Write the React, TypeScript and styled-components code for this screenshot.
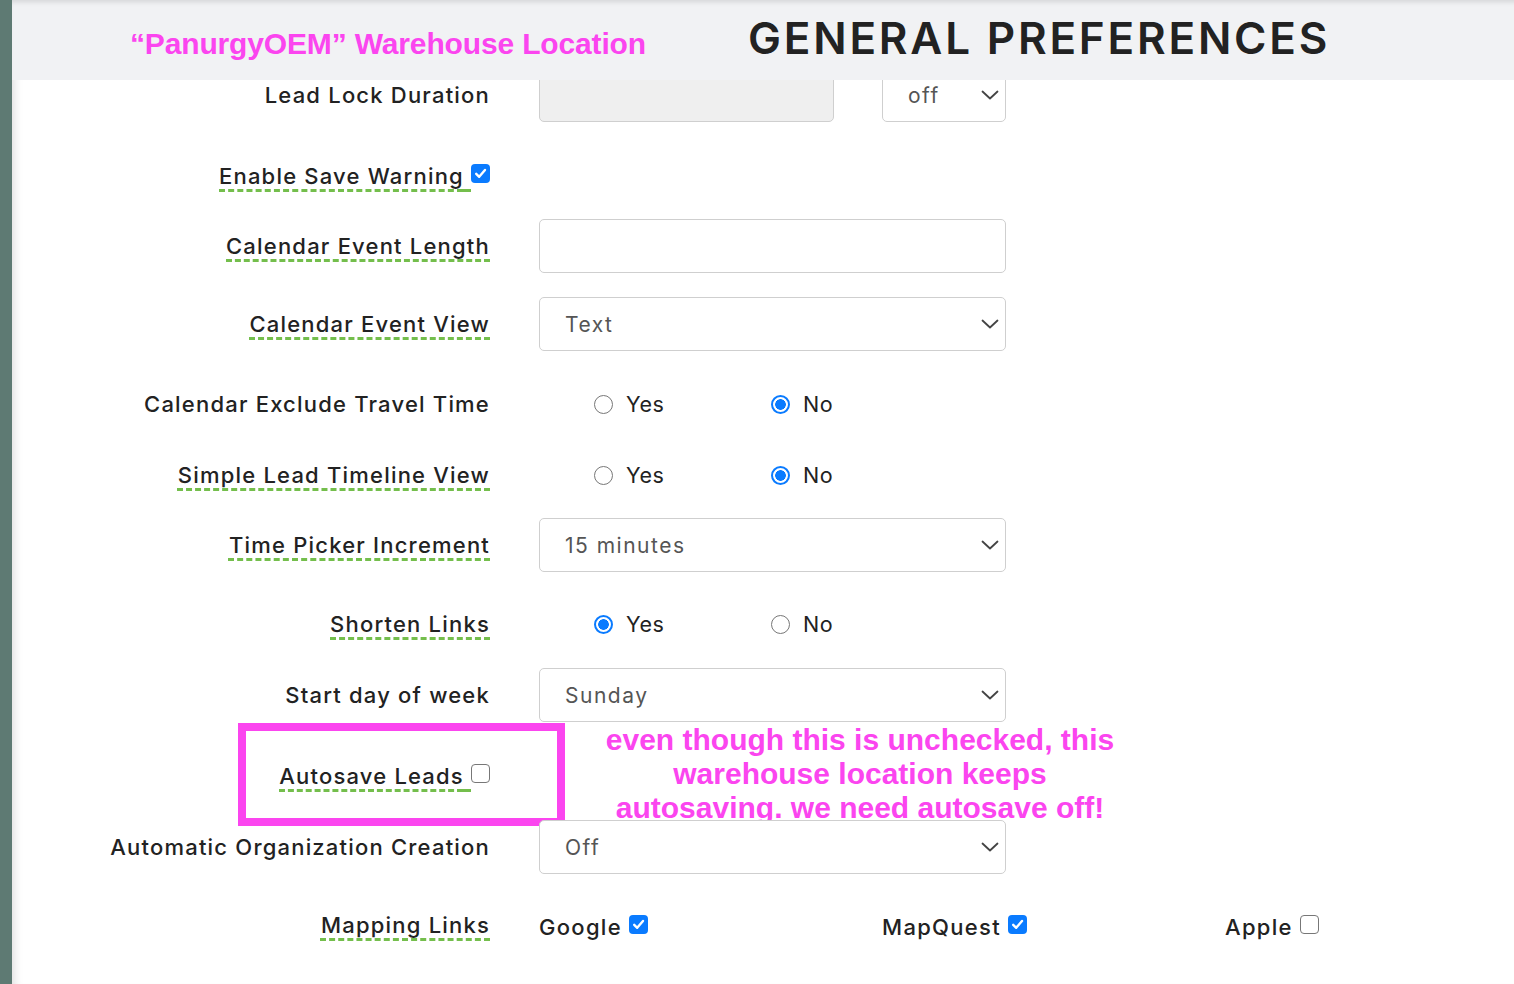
import React from "react";
import styled, { createGlobalStyle } from "styled-components";

const GlobalStyle = createGlobalStyle`
  html, body { margin: 0; padding: 0; background: #fff; }
  body { font-family: Inter, "Open Sans", sans-serif; color: #222; }
  * { box-sizing: border-box; }
`;

const PINK = "#fb45ef";
const BLUE = "#0a7bff";

const Shell = styled.div`
  display: flex;
  width: 1514px;
  height: 984px;
  overflow: hidden;
`;

const SideBar = styled.div`
  width: 12px;
  flex: 0 0 12px;
  background: #5e7a73;
`;

const Main = styled.div`
  flex: 1;
  display: flex;
  flex-direction: column;
  position: relative;
  box-shadow: inset 10px 0 10px -8px rgba(0, 0, 0, 0.14);
`;

const Header = styled.header`
  position: relative;
  z-index: 2;
  height: 80px;
  flex: 0 0 80px;
  display: flex;
  align-items: center;
  background: #f1f2f4;
  box-shadow: inset 0 5px 5px -3px rgba(0, 0, 0, 0.12);
`;

const Note = styled.div`
  font-family: "Liberation Sans", Arial, sans-serif;
  font-weight: 700;
  color: ${PINK};
  font-size: 30px;
  line-height: 34px;
`;

const HeaderNote = styled(Note)`
  margin-left: 118px;
  margin-top: 8px;
  width: 618px;
  letter-spacing: -0.15px;
`;

const PageTitle = styled.h1`
  margin: 0;
  margin-top: -4px;
  font-family: Inter, sans-serif;
  font-weight: 600;
  font-size: 44px;
  letter-spacing: 2.8px;
  color: #222;
`;

const Form = styled.div`
  display: flex;
  flex-direction: column;
  margin-top: -12px;
`;

const Row = styled.div<{ $space: number }>`
  position: relative;
  display: grid;
  grid-template-columns: 478px 1fr;
  column-gap: 49px;
  align-items: center;
  height: 54px;
  margin-top: ${(p) => p.$space}px;
`;

const Label = styled.div`
  justify-self: end;
  text-align: right;
  font-size: 22px;
  font-weight: 500;
  letter-spacing: 1.2px;
  color: #222;
  white-space: nowrap;
  display: flex;
  align-items: center;
`;

const LabelText = styled.span<{ $tip?: boolean }>`
  text-decoration-line: ${(p) => (p.$tip ? "underline" : "none")};
  text-decoration-style: dashed;
  text-decoration-color: #74be4c;
  text-decoration-thickness: 2.5px;
  text-underline-offset: 5px;
`;

const Box = styled.span<{ $checked?: boolean }>`
  display: inline-flex;
  align-items: center;
  justify-content: center;
  width: 19px;
  height: 19px;
  border-radius: 4px;
  flex: 0 0 19px;
  background: ${(p) => (p.$checked ? BLUE : "#fff")};
  border: ${(p) => (p.$checked ? "none" : "1.5px solid #777")};
  margin-top: -5px;
`;

const Checkbox = ({ checked }: { checked?: boolean }) => (
  <Box $checked={checked}>
    {checked && (
      <svg width="13" height="13" viewBox="0 0 13 13">
        <path d="M2.2 6.8 L5.2 9.8 L11 3" fill="none" stroke="#fff" strokeWidth="2.4" strokeLinecap="round" strokeLinejoin="round" />
      </svg>
    )}
  </Box>
);

const Field = styled.div<{ $w: number; $disabled?: boolean }>`
  width: ${(p) => p.$w}px;
  height: 54px;
  border: 1px solid #cfcfcf;
  border-radius: 5px;
  background: ${(p) => (p.$disabled ? "#efefef" : "#fff")};
  display: flex;
  align-items: center;
  justify-content: space-between;
  padding: 0 6px 0 25px;
  font-size: 21px;
  font-weight: 400;
  letter-spacing: 1.5px;
  color: #555;
`;

const Chevron = () => (
  <svg width="18" height="10" viewBox="0 0 18 10">
    <path d="M1.5 1.5 L9 8.5 L16.5 1.5" fill="none" stroke="#444" strokeWidth="1.8" strokeLinecap="round" strokeLinejoin="round" />
  </svg>
);

const Select = ({ w, value }: { w: number; value: string }) => (
  <Field $w={w}>
    <span>{value}</span>
    <Chevron />
  </Field>
);

const Pair = styled.div`
  display: flex;
  align-items: center;
  gap: 48px;
`;

const RadioGroup = styled.div`
  display: grid;
  grid-template-columns: 177px 177px;
  padding-left: 55px;
`;

const RadioOption = styled.label`
  display: flex;
  align-items: center;
  gap: 13px;
  font-size: 21.5px;
  font-weight: 400;
  letter-spacing: 0.5px;
  color: #222;
`;

const Dot = styled.span<{ $on?: boolean }>`
  width: 19px;
  height: 19px;
  border-radius: 50%;
  border: ${(p) => (p.$on ? `2px solid ${BLUE}` : "1.5px solid #777")};
  background: ${(p) => (p.$on ? `radial-gradient(circle, ${BLUE} 0 5px, #fff 5.6px)` : "#fff")};
`;

const Radio = ({ value }: { value: "Yes" | "No" }) => (
  <RadioGroup>
    <RadioOption>
      <Dot $on={value === "Yes"} />
      Yes
    </RadioOption>
    <RadioOption>
      <Dot $on={value === "No"} />
      No
    </RadioOption>
  </RadioGroup>
);

const MapGrid = styled.div`
  display: grid;
  grid-template-columns: 343px 343px 343px;
`;

const MapItem = styled.div`
  display: flex;
  align-items: center;
  gap: 7px;
  font-size: 22px;
  font-weight: 500;
  letter-spacing: 1.3px;
  color: #222;
  padding-top: 4px;
`;

const Highlight = styled.div`
  position: absolute;
  left: 226px;
  top: -26px;
  width: 327px;
  height: 103px;
  border: 8px solid ${PINK};
  pointer-events: none;
`;

const Annotation = styled(Note)`
  position: absolute;
  left: 560px;
  top: -26px;
  width: 576px;
  text-align: center;
`;

const Check = ({ label, tip, checked }: { label: string; tip?: boolean; checked?: boolean }) => (
  <Label>
    <LabelText $tip={tip}>{label}&nbsp;</LabelText>
    <Checkbox checked={checked} />
  </Label>
);

export default function App() {
  return (
    <>
      <GlobalStyle />
      <Shell>
        <SideBar />
        <Main>
          <Header>
            <HeaderNote>“PanurgyOEM” Warehouse Location</HeaderNote>
            <PageTitle>GENERAL PREFERENCES</PageTitle>
          </Header>
          <Form>
            <Row $space={0}>
              <Label><LabelText>Lead Lock Duration</LabelText></Label>
              <Pair>
                <Field $w={295} $disabled />
                <Select w={124} value="off" />
              </Pair>
            </Row>
            <Row $space={27}>
              <Check label="Enable Save Warning" tip checked />
              <div />
            </Row>
            <Row $space={16}>
              <Label><LabelText $tip>Calendar Event Length</LabelText></Label>
              <Field $w={467} />
            </Row>
            <Row $space={24}>
              <Label><LabelText $tip>Calendar Event View</LabelText></Label>
              <Select w={467} value="Text" />
            </Row>
            <Row $space={26}>
              <Label><LabelText>Calendar Exclude Travel Time</LabelText></Label>
              <Radio value="No" />
            </Row>
            <Row $space={17}>
              <Label><LabelText $tip>Simple Lead Timeline View</LabelText></Label>
              <Radio value="No" />
            </Row>
            <Row $space={16}>
              <Label><LabelText $tip>Time Picker Increment</LabelText></Label>
              <Select w={467} value="15 minutes" />
            </Row>
            <Row $space={25}>
              <Label><LabelText $tip>Shorten Links</LabelText></Label>
              <Radio value="Yes" />
            </Row>
            <Row $space={17}>
              <Label><LabelText>Start day of week</LabelText></Label>
              <Select w={467} value="Sunday" />
            </Row>
            <Row $space={27}>
              <Check label="Autosave Leads" tip />
              <div />
              <Highlight />
              <Annotation>
                even though this is unchecked, this
                <br />
                warehouse location keeps
                <br />
                autosaving. we need autosave off!
              </Annotation>
            </Row>
            <Row $space={17}>
              <Label><LabelText>Automatic Organization Creation</LabelText></Label>
              <Select w={467} value="Off" />
            </Row>
            <Row $space={24}>
              <Label><LabelText $tip>Mapping Links</LabelText></Label>
              <MapGrid>
                <MapItem>Google <Checkbox checked /></MapItem>
                <MapItem>MapQuest <Checkbox checked /></MapItem>
                <MapItem>Apple <Checkbox /></MapItem>
              </MapGrid>
            </Row>
          </Form>
        </Main>
      </Shell>
    </>
  );
}
